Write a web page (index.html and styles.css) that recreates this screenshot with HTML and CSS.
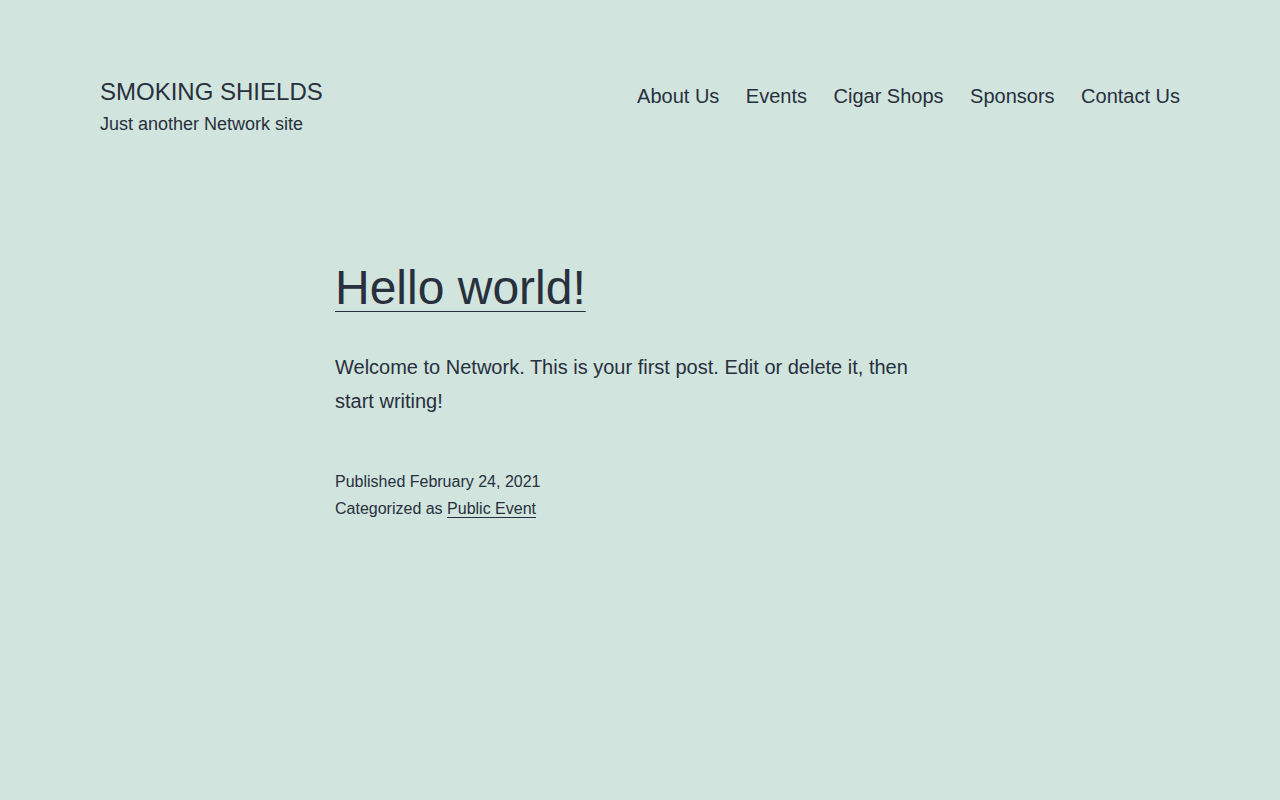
FILE: index.html
```html
<!DOCTYPE html>
<html lang="en">
<head>
    <meta charset="UTF-8">
    <meta name="viewport" content="width=device-width, initial-scale=1.0">
    <title>Smoking Shields – Just another Network site</title>
    <link rel="stylesheet" href="styles.css">
</head>
<body>
    <header class="site-header">
        <div class="site-branding">
            <p class="site-title"><a href="#">Smoking Shields</a></p>
            <p class="site-description">Just another Network site</p>
        </div>
        <nav class="primary-navigation">
            <ul class="menu">
                <li><a href="#">About Us</a></li>
                <li><a href="#">Events</a></li>
                <li><a href="#">Cigar Shops</a></li>
                <li><a href="#">Sponsors</a></li>
                <li><a href="#">Contact Us</a></li>
            </ul>
        </nav>
    </header>

    <main class="site-main">
        <article class="post">
            <h2 class="entry-title"><a href="#">Hello world!</a></h2>
            <div class="entry-content">
                <p>Welcome to Network. This is your first post. Edit or delete it, then start writing!</p>
            </div>
            <footer class="entry-footer">
                <span class="posted-on">Published <time>February 24, 2021</time></span>
                <span class="cat-links">Categorized as <a href="#">Public Event</a></span>
            </footer>
        </article>
    </main>
</body>
</html>
```

FILE: styles.css
```css
body {
    margin: 0;
    background-color: #d1e4dd;
    color: #28303d;
    font-family: "Liberation Sans", Arial, sans-serif;
}
a {
    color: #28303d;
}
.site-header {
    max-width: 1080px;
    margin: 0 auto;
    padding: 76px 0 0;
    display: flex;
    justify-content: space-between;
    align-items: flex-start;
}
.site-title {
    margin: 0;
    font-size: 24px;
    line-height: 1.3;
    text-transform: uppercase;
}
.site-title a {
    text-decoration: none;
}
.site-description {
    margin: 5px 0 0;
    font-size: 18px;
    line-height: 1.4;
}
.menu {
    list-style: none;
    margin: 0;
    padding: 0;
    display: flex;
    gap: 26.5px;
}
.menu a {
    display: block;
    font-size: 20px;
    line-height: 1.3;
    padding-top: 7px;
    text-decoration: none;
}
.site-main {
    max-width: 610px;
    margin: 0 auto;
    padding-top: 120px;
}
.entry-title {
    margin: 0;
    font-size: 48px;
    font-weight: normal;
    line-height: 1.3;
}
.entry-title a {
    text-decoration-thickness: 1px;
    text-underline-offset: 7px;
}
.entry-content {
    margin-top: 30px;
    font-size: 20px;
    line-height: 1.7;
}
.entry-content p {
    margin: 0;
}
.entry-footer {
    margin-top: 50px;
    font-size: 16px;
    line-height: 1.7;
}
.entry-footer span {
    display: block;
}
.cat-links a {
    text-underline-offset: 3px;
}
```
